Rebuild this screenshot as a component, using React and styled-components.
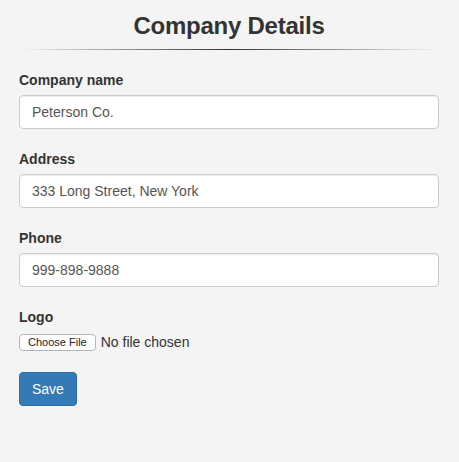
import React from "react";
import styled, { createGlobalStyle } from "styled-components";

const GlobalStyle = createGlobalStyle`
  html, body {
    margin: 0;
    padding: 0;
    background: #f4f4f4;
  }
  body {
    font-family: "Liberation Sans", Arial, sans-serif;
    font-size: 14px;
    line-height: 20px;
    color: #333;
  }
  * {
    box-sizing: border-box;
  }
`;

const fields = [
  { label: "Company name", value: "Peterson Co." },
  { label: "Address", value: "333 Long Street, New York" },
  { label: "Phone", value: "999-898-9888" },
];

const App = () => {
  return (
    <>
      <GlobalStyle />
      <Page>
        <Title>Company Details</Title>
        <Divider />
        <Form onSubmit={(e) => e.preventDefault()}>
          {fields.map((f) => (
            <FormGroup key={f.label}>
              <Label>{f.label}</Label>
              <Input type="text" defaultValue={f.value} />
            </FormGroup>
          ))}
          <FormGroup>
            <Label>Logo</Label>
            <FileRow>
              <FileButton type="button">Choose File</FileButton>
              <FileText>No file chosen</FileText>
            </FileRow>
          </FormGroup>
          <SaveButton type="submit">Save</SaveButton>
        </Form>
      </Page>
    </>
  );
};

export default App;

const Page = styled.div`
  padding: 9px 20px 40px 19px;
`;

const Title = styled.h2`
  margin: 0;
  padding-top: 2px;
  text-align: center;
  font-size: 24px;
  line-height: 30px;
  font-weight: 700;
  letter-spacing: -0.25px;
  color: #333;
`;

const Divider = styled.hr`
  margin: 8px 2px 0 1px;
  height: 1px;
  border: 0;
  background-image: linear-gradient(
    to right,
    rgba(51, 51, 51, 0),
    rgba(51, 51, 51, 1),
    rgba(51, 51, 51, 0)
  );
`;

const Form = styled.form`
  padding-top: 20px;
`;

const FormGroup = styled.div`
  margin-bottom: 20px;
`;

const Label = styled.label`
  display: block;
  margin-bottom: 5px;
  font-weight: 700;
  font-size: 14px;
  line-height: 20px;
`;

const Input = styled.input`
  display: block;
  width: 100%;
  height: 34px;
  padding: 6px 12px;
  font-family: inherit;
  font-size: 14px;
  line-height: 20px;
  color: #555;
  background: #fff;
  border: 1px solid #ccc;
  border-radius: 4px;
  box-shadow: inset 0 1px 1px rgba(0, 0, 0, 0.075);
  outline: none;
`;

const FileRow = styled.div`
  display: flex;
  align-items: center;
  height: 20px;
`;

const FileButton = styled.button`
  height: 17px;
  padding: 0 8px;
  margin-right: 5px;
  font-family: "Liberation Sans", Arial, sans-serif;
  font-size: 11px;
  line-height: 15px;
  color: #222;
  background: #fff;
  border: 1px solid #b5b5b5;
  border-radius: 4px;
`;

const FileText = styled.span`
  font-size: 14px;
  color: #333;
`;

const SaveButton = styled.button`
  height: 34px;
  padding: 6px 12px;
  font-family: inherit;
  font-size: 14px;
  line-height: 20px;
  color: #fff;
  background: #337ab7;
  border: 1px solid #2e6da4;
  border-radius: 4px;
`;
